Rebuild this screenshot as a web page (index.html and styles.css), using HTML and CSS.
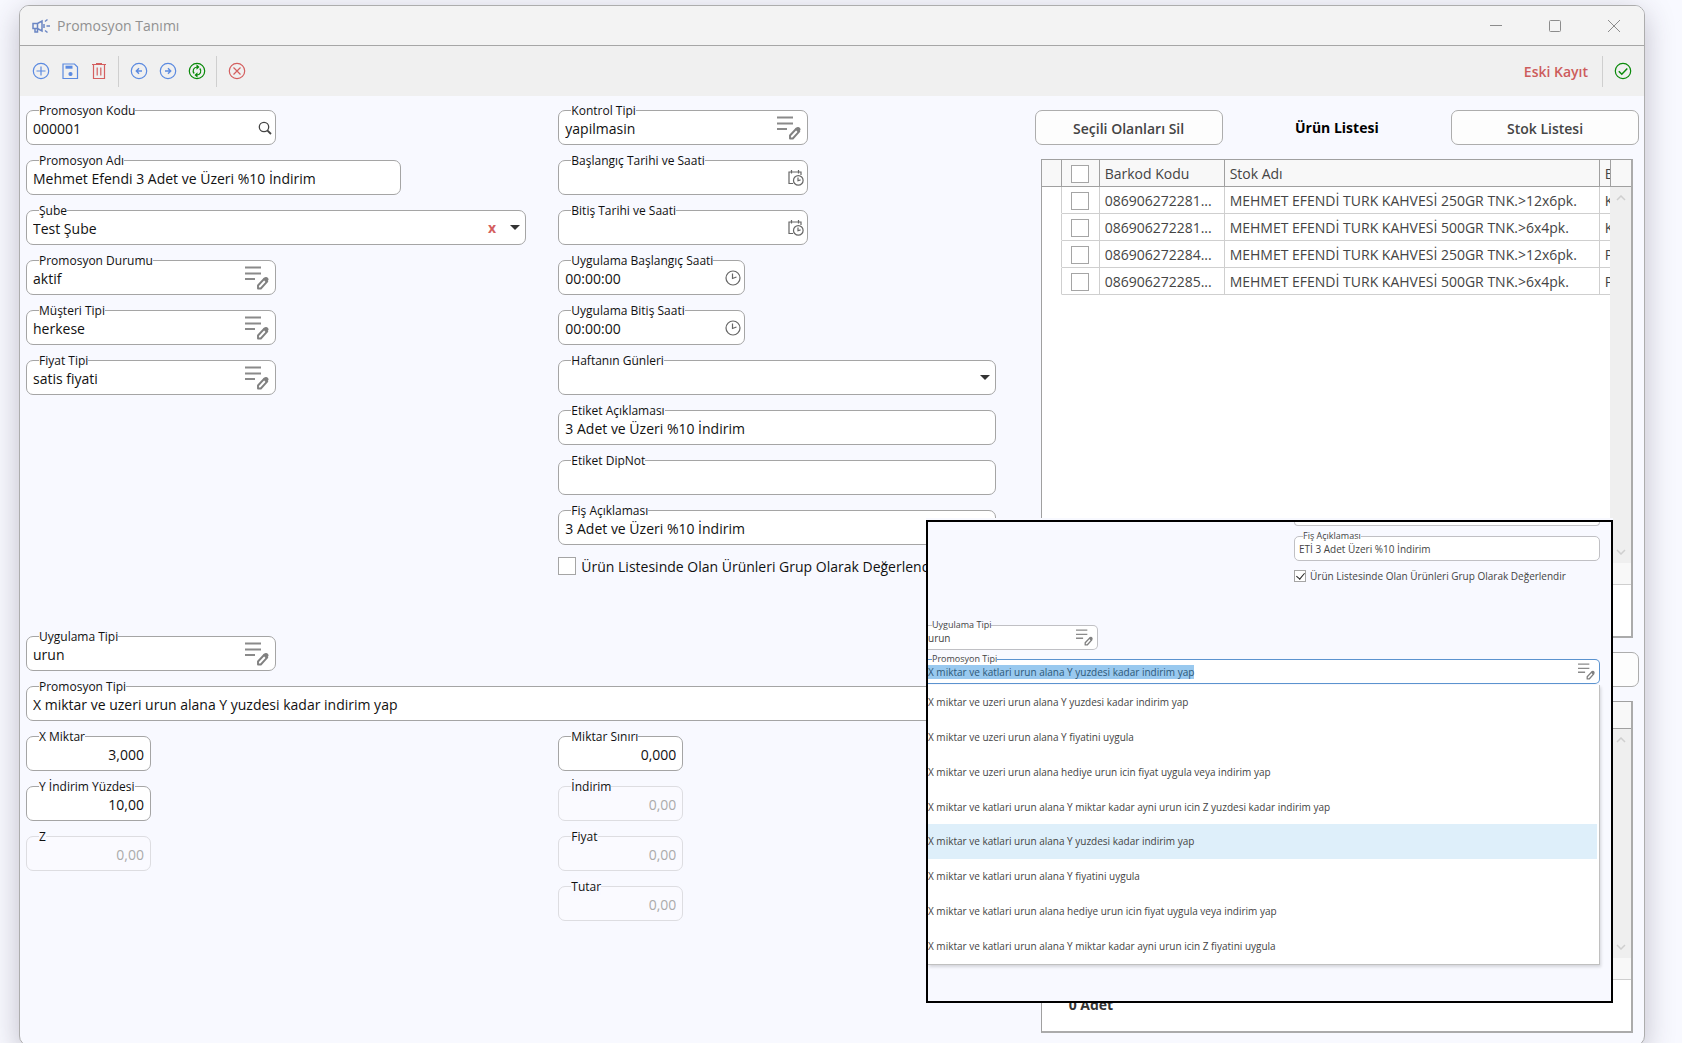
FILE: index.html
```html
<!DOCTYPE html>
<html lang="tr">
<head>
    <meta charset="UTF-8">
    <meta name="viewport" content="width=device-width, initial-scale=1.0">
    <title>Promosyon Tanımı</title>
    <link rel="stylesheet" href="styles.css">
</head>
<body>

<!-- Shared icons -->
<svg class="sprite" aria-hidden="true">
    <symbol id="i-list" viewBox="0 0 24 24">
        <path d="M0 1.500h16M0 7.500h16M0 13h10" fill="none" stroke="#8a8a8a" stroke-width="1.900"/>
        <path d="M13 22.500v-3l6.500-7 2.800 2.800-6.500 7.200z" fill="#fff" stroke="#808080" stroke-width="1.900" stroke-linejoin="round"/>
        <path d="M18 13l2.500-2c1.500-.6 3.500 1.200 3 3l-2.500 2.500z" fill="#808080"/>
    </symbol>
    <symbol id="i-caltime" viewBox="0 0 16 16">
        <path d="M5 13.500H1V2h12v3M3.500 0v3.500M10.500 0v3.500" fill="none" stroke="#666" stroke-width="1.200"/>
        <circle cx="10.300" cy="10.400" r="4.800" fill="#fff" stroke="#666" stroke-width="1.200"/>
        <path d="M10 7.500v3.200l2.600-.8" fill="none" stroke="#666" stroke-width="1.200"/>
    </symbol>
    <symbol id="i-clock" viewBox="0 0 16 16">
        <circle cx="8" cy="8" r="7" fill="none" stroke="#666" stroke-width="1.200"/>
        <path d="M7.500 3.500v5l4-1.500" fill="none" stroke="#666" stroke-width="1.200"/>
    </symbol>
    <symbol id="i-up" viewBox="0 0 10 6"><path d="M1 5l4-4 4 4" fill="none" stroke="#cfcfcf" stroke-width="1.500"/></symbol>
    <symbol id="i-down" viewBox="0 0 10 6"><path d="M1 1l4 4 4-4" fill="none" stroke="#cfcfcf" stroke-width="1.500"/></symbol>
</svg>

<div class="window">
    <header class="titlebar">
        <svg class="title-icon" viewBox="0 0 18 16" fill="none" stroke="#6b86c4" stroke-width="1.500">
            <path d="M1 5.500h4.500L10 3v10L5.500 10.500H1zM3 10.500V14h2.500v-3.500"/>
            <path d="M5.500 5.500v5M12 6v4M14.500 8H18M13 3.500L15.500 1.500M13 12.500l2.500 2"/>
        </svg>
        <h1 class="title">Promosyon Tanımı</h1>
        <div class="window-buttons">
            <button type="button" aria-label="Küçült"><svg viewBox="0 0 14 14"><path d="M1 6.500h12"/></svg></button>
            <button type="button" aria-label="Büyüt"><svg viewBox="0 0 14 14"><rect x="1.500" y="1.500" width="11" height="11" rx="1"/></svg></button>
            <button type="button" aria-label="Kapat"><svg viewBox="0 0 14 14"><path d="M1 1l12 12M13 1L1 13"/></svg></button>
        </div>
    </header>

    <div class="toolbar">
        <button type="button" class="tool blue" aria-label="Yeni"><svg viewBox="0 0 18 18"><circle cx="9" cy="9" r="7.700"/><path d="M9 4.500v9M4.500 9h9"/></svg></button>
        <button type="button" class="tool blue" aria-label="Kaydet"><svg viewBox="0 0 18 18"><path d="M2 2h11.500L16.500 5v11.500H2z"/><path d="M4.500 5.200h7" stroke-width="3"/><circle cx="9.500" cy="12" r="1.500" fill="#5b8ae0"/></svg></button>
        <button type="button" class="tool red" aria-label="Sil"><svg viewBox="0 0 18 18"><path d="M2 2.500h14M3.500 2.500v14h11v-14M7.200 5.500v8M10.800 5.500v8M6 1.500h6"/></svg></button>
        <span class="tool-sep"></span>
        <button type="button" class="tool blue" aria-label="Önceki"><svg viewBox="0 0 18 18"><circle cx="9" cy="9" r="7.700"/><path d="M12 9H6.500M9 6.300L6.300 9 9 11.700" stroke-width="1.400"/></svg></button>
        <button type="button" class="tool blue" aria-label="Sonraki"><svg viewBox="0 0 18 18"><circle cx="9" cy="9" r="7.700"/><path d="M6 9h5.500M9 6.300L11.700 9 9 11.700" stroke-width="1.400"/></svg></button>
        <button type="button" class="tool green" aria-label="Yenile"><svg viewBox="0 0 18 18"><circle cx="9" cy="9" r="7.700"/><path d="M6.200 11.500C4 9 5.500 5 9.500 5M11.800 6.500C14 9 12.500 13 8.500 13"/><path d="M8.500 2.200v5.600L11.500 5zM9.500 10.200v5.600L6.500 13z" fill="#0a8a0a" stroke="none"/></svg></button>
        <span class="tool-sep"></span>
        <button type="button" class="tool red" aria-label="Vazgeç"><svg viewBox="0 0 18 18"><circle cx="9" cy="9" r="7.700"/><path d="M5.500 5.500l7 7M12.500 5.500l-7 7"/></svg></button>
        <strong class="record-state">Eski Kayıt</strong>
        <span class="tool-sep"></span>
        <button type="button" class="tool green" aria-label="Onayla"><svg viewBox="0 0 18 18"><circle cx="9" cy="9" r="7.700"/><path d="M4.800 9.200l3 3 5.500-5.700" stroke-width="1.500"/></svg></button>
    </div>

    <main class="content">
        <form class="form">
            <div class="form-columns">
                <div class="stack">
                    <div class="field w-md">
                        <label for="kod">Promosyon Kodu</label>
                        <input id="kod" type="text" value="000001">
                        <button type="button" class="field-btn narrow" aria-label="Ara"><svg class="icon-sm" viewBox="0 0 14 14" fill="none" stroke="#444"><circle cx="6" cy="6" r="4.700" stroke-width="1.300"/><path d="M9.300 9.300L13 13" stroke-width="1.800"/></svg></button>
                    </div>
                    <div class="field w-lg">
                        <label for="ad">Promosyon Adı</label>
                        <input id="ad" type="text" value="Mehmet Efendi 3 Adet ve Üzeri %10 İndirim">
                    </div>
                    <div class="field w-xl">
                        <label for="sube">Şube</label>
                        <select id="sube"><option>Test Şube</option></select>
                        <button type="button" class="clear-btn" aria-label="Temizle">x</button>
                        <span class="caret"></span>
                    </div>
                    <div class="field w-md">
                        <label for="durum">Promosyon Durumu</label>
                        <input id="durum" type="text" value="aktif">
                        <button type="button" class="field-btn" aria-label="Seç"><svg class="icon-lg"><use href="#i-list"/></svg></button>
                    </div>
                    <div class="field w-md">
                        <label for="musteri">Müşteri Tipi</label>
                        <input id="musteri" type="text" value="herkese">
                        <button type="button" class="field-btn" aria-label="Seç"><svg class="icon-lg"><use href="#i-list"/></svg></button>
                    </div>
                    <div class="field w-md">
                        <label for="fiyattipi">Fiyat Tipi</label>
                        <input id="fiyattipi" type="text" value="satis fiyati">
                        <button type="button" class="field-btn" aria-label="Seç"><svg class="icon-lg"><use href="#i-list"/></svg></button>
                    </div>
                </div>

                <div class="stack">
                    <div class="field w-md">
                        <label for="kontrol">Kontrol Tipi</label>
                        <input id="kontrol" type="text" value="yapilmasin">
                        <button type="button" class="field-btn" aria-label="Seç"><svg class="icon-lg"><use href="#i-list"/></svg></button>
                    </div>
                    <div class="field w-md">
                        <label for="bastarih">Başlangıç Tarihi ve Saati</label>
                        <input id="bastarih" type="text">
                        <button type="button" class="field-btn narrow" aria-label="Tarih seç"><svg class="icon-md"><use href="#i-caltime"/></svg></button>
                    </div>
                    <div class="field w-md">
                        <label for="bittarih">Bitiş Tarihi ve Saati</label>
                        <input id="bittarih" type="text">
                        <button type="button" class="field-btn narrow" aria-label="Tarih seç"><svg class="icon-md"><use href="#i-caltime"/></svg></button>
                    </div>
                    <div class="field w-time">
                        <label for="bassaat">Uygulama Başlangıç Saati</label>
                        <input id="bassaat" type="text" value="00:00:00">
                        <button type="button" class="field-btn narrow" aria-label="Saat seç"><svg class="icon-md"><use href="#i-clock"/></svg></button>
                    </div>
                    <div class="field w-time">
                        <label for="bitsaat">Uygulama Bitiş Saati</label>
                        <input id="bitsaat" type="text" value="00:00:00">
                        <button type="button" class="field-btn narrow" aria-label="Saat seç"><svg class="icon-md"><use href="#i-clock"/></svg></button>
                    </div>
                    <div class="field">
                        <label for="gunler">Haftanın Günleri</label>
                        <select id="gunler"><option></option></select>
                        <span class="caret"></span>
                    </div>
                    <div class="field">
                        <label for="etiket">Etiket Açıklaması</label>
                        <input id="etiket" type="text" value="3 Adet ve Üzeri %10 İndirim">
                    </div>
                    <div class="field">
                        <label for="dipnot">Etiket DipNot</label>
                        <input id="dipnot" type="text">
                    </div>
                    <div class="field">
                        <label for="fis">Fiş Açıklaması</label>
                        <input id="fis" type="text" value="3 Adet ve Üzeri %10 İndirim">
                    </div>
                    <label class="check-row"><input type="checkbox" class="check"> Ürün Listesinde Olan Ürünleri Grup Olarak Değerlendir</label>
                </div>
            </div>

            <div class="stack wide-fields">
                <div class="field w-md">
                    <label for="uygulama">Uygulama Tipi</label>
                    <input id="uygulama" type="text" value="urun">
                    <button type="button" class="field-btn" aria-label="Seç"><svg class="icon-lg"><use href="#i-list"/></svg></button>
                </div>
                <div class="field">
                    <label for="tip">Promosyon Tipi</label>
                    <input id="tip" type="text" value="X miktar ve uzeri urun alana Y yuzdesi kadar indirim yap">
                </div>
            </div>

            <div class="form-columns">
                <div class="stack">
                    <div class="field num w-sm"><label for="x">X Miktar</label><input id="x" type="text" value="3,000"></div>
                    <div class="field num w-sm"><label for="y">Y İndirim Yüzdesi</label><input id="y" type="text" value="10,00"></div>
                    <div class="field num w-sm off"><label for="z">Z</label><input id="z" type="text" value="0,00" disabled></div>
                </div>
                <div class="stack">
                    <div class="field num w-sm"><label for="sinir">Miktar Sınırı</label><input id="sinir" type="text" value="0,000"></div>
                    <div class="field num w-sm off"><label for="indirim">İndirim</label><input id="indirim" type="text" value="0,00" disabled></div>
                    <div class="field num w-sm off"><label for="fiyat">Fiyat</label><input id="fiyat" type="text" value="0,00" disabled></div>
                    <div class="field num w-sm off"><label for="tutar">Tutar</label><input id="tutar" type="text" value="0,00" disabled></div>
                </div>
            </div>
        </form>

        <section class="lists">
            <div class="list-head">
                <button type="button" class="btn">Seçili Olanları Sil</button>
                <h2>Ürün Listesi</h2>
                <button type="button" class="btn">Stok Listesi</button>
            </div>
            <div class="grid grid-main">
                <div class="grid-body">
                    <div class="grid-view">
                        <table>
                            <colgroup><col class="c-mark"><col class="c-check"><col class="c-code"><col class="c-name"><col class="c-unit"></colgroup>
                            <thead>
                                <tr><th></th><th><input type="checkbox" class="check" aria-label="Tümünü seç"></th><th>Barkod Kodu</th><th>Stok Adı</th><th>B</th></tr>
                            </thead>
                            <tbody>
                                <tr><td></td><td><input type="checkbox" class="check" aria-label="Satır 1"></td><td>086906272281...</td><td>MEHMET EFENDİ TURK KAHVESİ 250GR TNK.&gt;12x6pk.</td><td>K</td></tr>
                                <tr><td></td><td><input type="checkbox" class="check" aria-label="Satır 2"></td><td>086906272281...</td><td>MEHMET EFENDİ TURK KAHVESİ 500GR TNK.&gt;6x4pk.</td><td>K</td></tr>
                                <tr><td></td><td><input type="checkbox" class="check" aria-label="Satır 3"></td><td>086906272284...</td><td>MEHMET EFENDİ TURK KAHVESİ 250GR TNK.&gt;12x6pk.</td><td>P</td></tr>
                                <tr><td></td><td><input type="checkbox" class="check" aria-label="Satır 4"></td><td>086906272285...</td><td>MEHMET EFENDİ TURK KAHVESİ 500GR TNK.&gt;6x4pk.</td><td>P</td></tr>
                            </tbody>
                        </table>
                    </div>
                    <div class="grid-scroll">
                        <div class="scroll-head"></div>
                        <div class="scroll-track"><svg><use href="#i-up"/></svg><svg><use href="#i-down"/></svg></div>
                    </div>
                </div>
                <div class="grid-strip"></div>
                <div class="grid-footer"></div>
            </div>

            <div class="list-head second">
                <button type="button" class="btn" aria-label="Stok Listesi"></button>
            </div>
            <div class="grid grid-gift">
                <div class="grid-body">
                    <div class="grid-view"></div>
                    <div class="grid-scroll">
                        <div class="scroll-head"></div>
                        <div class="scroll-track"><svg><use href="#i-up"/></svg><svg><use href="#i-down"/></svg></div>
                    </div>
                </div>
                <div class="grid-strip"></div>
                <div class="grid-footer">0 Adet</div>
            </div>
        </section>
    </main>

    <!-- Floating panel with the open promotion type list -->
    <aside class="popup">
        <div class="popup-right">
            <div class="mini-tail"></div>
            <div class="field mini">
                <label for="p-fis">Fiş Açıklaması</label>
                <input id="p-fis" type="text" value="ETİ 3 Adet Üzeri %10 İndirim">
            </div>
            <label class="check-row mini-check"><input type="checkbox" class="check" checked> Ürün Listesinde Olan Ürünleri Grup Olarak Değerlendir</label>
        </div>
        <div class="popup-fields">
            <div class="field mini cut w-mini">
                <label for="p-uyg">Uygulama Tipi</label>
                <input id="p-uyg" type="text" value="urun">
                <button type="button" class="field-btn" aria-label="Seç"><svg class="icon-mini"><use href="#i-list"/></svg></button>
            </div>
            <div class="field mini cut active">
                <label id="p-tip-label">Promosyon Tipi</label>
                <div class="combo-value" role="combobox" aria-labelledby="p-tip-label" aria-expanded="true" aria-controls="p-list" tabindex="0"><mark>X miktar ve katlari urun alana Y yuzdesi kadar indirim yap</mark></div>
                <button type="button" class="field-btn" aria-label="Seç"><svg class="icon-mini"><use href="#i-list"/></svg></button>
            </div>
            <ul class="options" id="p-list" role="listbox">
                <li role="option">X miktar ve uzeri urun alana Y yuzdesi kadar indirim yap</li>
                <li role="option">X miktar ve uzeri urun alana Y fiyatini uygula</li>
                <li role="option">X miktar ve uzeri urun alana hediye urun icin fiyat uygula veya indirim yap</li>
                <li role="option">X miktar ve katlari urun alana Y miktar kadar ayni urun icin Z yuzdesi kadar indirim yap</li>
                <li role="option" aria-selected="true">X miktar ve katlari urun alana Y yuzdesi kadar indirim yap</li>
                <li role="option">X miktar ve katlari urun alana Y fiyatini uygula</li>
                <li role="option">X miktar ve katlari urun alana hediye urun icin fiyat uygula veya indirim yap</li>
                <li role="option">X miktar ve katlari urun alana Y miktar kadar ayni urun icin Z fiyatini uygula</li>
            </ul>
        </div>
    </aside>
</div>

</body>
</html>
```
FILE: styles.css
```css
* { box-sizing: border-box; }
body {
    margin: 0;
    padding: 5px 37px 0 19px;
    min-height: 100vh;
    background-color: #f8f9ff;
    color: #111;
    font-family: "Open Sans", "Noto Sans", sans-serif;
    font-size: 14px;
    overflow: hidden;
}
button, input, select {
    font: inherit;
    color: inherit;
}
button {
    padding: 0;
    border: none;
    background: none;
}
.sprite {
    position: absolute;
    width: 0;
    height: 0;
}

/* Window frame */
.window {
    position: relative;
    border: 1px solid #adadad;
    border-radius: 10px;
    background-color: #f8f9ff;
    box-shadow: 0 8px 30px rgba(50, 40, 60, 0.28);
}
.titlebar {
    display: flex;
    align-items: center;
    height: 40px;
    padding-left: 12px;
    border-bottom: 1px solid #a6a6a6;
    border-radius: 9px 9px 0 0;
    background-color: #f3f3f3;
}
.title-icon {
    width: 18px;
    height: 16px;
}
.title {
    margin: 0 auto 0 7px;
    font-size: 14px;
    font-weight: 400;
    color: #919191;
}
.window-buttons {
    display: flex;
    padding-right: 1px;
}
.window-buttons button {
    display: flex;
    align-items: center;
    justify-content: center;
    width: 59px;
    height: 38px;
}
.window-buttons svg {
    width: 14px;
    height: 14px;
    fill: none;
    stroke: #8c8c8c;
}

/* Toolbar */
.toolbar {
    display: flex;
    align-items: center;
    height: 50px;
    padding: 0 7px 0 6px;
    background-color: #f0f0f0;
}
.tool {
    display: flex;
    justify-content: center;
    width: 29px;
}
.tool svg {
    width: 18px;
    height: 18px;
    fill: none;
    stroke: currentColor;
    stroke-width: 1.2;
}
.blue { color: #5b8ae0; }
.red { color: #d45f5f; }
.green { color: #0a8a0a; }
.tool-sep {
    width: 1px;
    height: 31px;
    margin: 0 5px;
    background-color: #cfcfcf;
}
.record-state {
    margin-left: auto;
    margin-right: 9px;
    font-weight: 600;
    color: #cd5c5c;
}

/* Page layout */
.content {
    display: grid;
    grid-template-columns: minmax(0, 1008fr) minmax(0, 604fr);
    padding: 14px 5px 12px 6px;
}
.form-columns {
    display: grid;
    grid-template-columns: minmax(0, 532fr) minmax(0, 476fr);
}
.stack {
    display: flex;
    flex-direction: column;
    gap: 15px;
}
.form .stack:nth-child(2) { padding-right: 39px; }
.form .wide-fields {
    margin: 60px 0 15px;
    padding-right: 39px;
}

/* Fields */
.field {
    position: relative;
    display: flex;
    align-items: center;
    height: 35px;
    border: 1px solid #a5a5a5;
    border-radius: 7px;
    background-color: #fff;
}
.field > label {
    position: absolute;
    top: -9px;
    left: 12px;
    font-size: 12px;
    line-height: 17px;
    white-space: nowrap;
    background: linear-gradient(#f8f9ff 60%, #fff 60%);
}
.field input, .field select {
    flex: 1;
    min-width: 0;
    height: 33px;
    padding: 2px 6px 0;
    border: none;
    border-radius: 7px;
    outline: none;
    background: none;
    appearance: none;
}
.w-sm { width: 125px; }
.w-time { width: 187px; }
.w-md { width: 250px; }
.w-lg { width: 375px; }
.w-xl { width: 500px; }
.num input { text-align: right; }
.off {
    border-color: #dddde1;
    background-color: #fafaff;
}
.off > label { background: #f9f9ff; }
.off input { color: #ababab; }
.field-btn {
    display: flex;
    margin-right: 6px;
}
.field-btn.narrow { margin-right: 3px; }
.icon-sm { width: 14px; height: 14px; }
.icon-md { width: 16px; height: 16px; }
.icon-lg { width: 24px; height: 24px; }
.icon-mini { width: 17px; height: 17px; }
.clear-btn {
    margin-right: 14px;
    font-weight: 700;
    color: #d45f5f;
}
.caret {
    margin-right: 5px;
    border: 5px solid transparent;
    border-top-color: #333;
    border-bottom: none;
}

/* Check boxes */
.check {
    flex: none;
    width: 18px;
    height: 18px;
    margin: 0;
    border: 1px solid #a5a5a5;
    background-color: #fff;
    appearance: none;
}
.check-row {
    display: flex;
    align-items: center;
    gap: 5px;
    height: 20px;
    margin-top: -4px;
    white-space: nowrap;
}

/* Product lists */
.list-head {
    display: grid;
    grid-template-columns: 188px 1fr 188px;
    align-items: center;
    margin-bottom: 14px;
}
.list-head h2 {
    margin: 0;
    font-size: 14px;
    font-weight: 700;
    text-align: center;
    color: #000;
}
.list-head.second { margin-top: 14px; }
.list-head.second .btn { grid-column: 3; }
.btn {
    height: 35px;
    padding-top: 1px;
    border: 1px solid #adadad;
    border-radius: 7px;
    background-color: #fdfdfd;
    font-weight: 600;
    color: #444;
}
.grid {
    display: flex;
    flex-direction: column;
    margin: 0 6px;
    border: 1px solid #a0a0a0;
    border-right: 2px solid #ababab;
    border-bottom: 2px solid #ababab;
    background-color: #fff;
}
.grid-main { height: 479px; }
.grid-gift { height: 332px; }
.grid-body {
    display: flex;
    flex: 1;
    min-height: 0;
}
.grid-view {
    flex: 1;
    min-width: 0;
    overflow: hidden;
}
.grid-scroll {
    display: flex;
    flex-direction: column;
    width: 21px;
}
.scroll-head {
    height: 27px;
    border-bottom: 1px solid #a0a0a0;
    border-left: 1px solid #a0a0a0;
    background-color: #f8f8f8;
}
.scroll-track {
    display: flex;
    flex: 1;
    flex-direction: column;
    justify-content: space-between;
    align-items: center;
    padding: 8px 0;
    background-color: #efefef;
}
.scroll-track svg {
    width: 10px;
    height: 6px;
}
.grid-strip {
    height: 22px;
    border-bottom: 1px solid #cfcfcf;
    background-color: #f8f8f8;
}
.grid-footer {
    height: 51px;
    padding: 15px 27px;
    line-height: 20px;
    font-weight: 700;
    color: #333;
}

table {
    width: 683px;
    table-layout: fixed;
    border-spacing: 0;
    color: #444;
}
.c-mark { width: 20px; }
.c-check { width: 38px; }
.c-code, .c-unit { width: 125px; }
.c-name { width: 375px; }
th, td {
    height: 27px;
    padding: 2px 5px 0;
    border-right: 1px solid #cfcfcf;
    border-bottom: 1px solid #cfcfcf;
    font-weight: 400;
    line-height: 20px;
    text-align: left;
    white-space: nowrap;
}
th {
    border-color: #a0a0a0;
    background-color: #f8f8f8;
}
td:first-child { border-bottom-color: #fff; }
th:nth-child(2), td:nth-child(2) {
    text-align: center;
    line-height: 0;
}

/* Popup */
.popup {
    position: absolute;
    top: 514px;
    right: 31px;
    width: 687px;
    height: 483px;
    overflow: hidden;
    border: 2px solid #000;
    background-color: #f8f9ff;
    box-shadow: 0 -2px 0 #f8f9ff;
    color: #444;
    font-size: 10px;
}
.popup-right {
    width: 306px;
    margin-left: 366px;
}
.mini-tail {
    height: 4px;
    margin-bottom: 10px;
    border: 1px solid #c4c4c8;
    border-top: none;
    border-radius: 0 0 5px 5px;
    background-color: #fff;
}
.field.mini {
    height: 25px;
    border-color: #c0c0c4;
    border-radius: 5px;
}
.mini > label {
    top: -7px;
    left: 8px;
    font-size: 9px;
    line-height: 12px;
}
.mini input {
    height: 23px;
    padding: 1px 4px 0;
}
.mini .field-btn { margin-right: 4px; }
.mini-check {
    gap: 4px;
    height: 14px;
    margin-top: 8px;
}
.mini-check .check {
    display: grid;
    place-items: center;
    width: 12px;
    height: 12px;
}
.mini-check .check::before {
    content: "";
    width: 4px;
    height: 7px;
    margin-top: -2px;
    border: solid #222;
    border-width: 0 1px 1px 0;
    rotate: 40deg;
}
.popup-fields { margin: 42px 11px 0 0; }
.field.cut {
    margin-bottom: 9px;
    border-left: none;
    border-radius: 0 5px 5px 0;
}
.cut > label { left: 4px; }
.cut input { padding-left: 0; }
.w-mini { width: 170px; }
.field.active {
    margin-bottom: 1px;
    border-color: #5b93cf;
}
.combo-value {
    flex: 1;
    outline: none;
}
.combo-value mark {
    display: inline-block;
    height: 14px;
    line-height: 14px;
    background-color: #99c9ef;
    color: #2d5878;
}
.options {
    display: grid;
    grid-template-rows: repeat(8, 1fr);
    height: 280px;
    margin: 0;
    padding: 0 2px 1px 0;
    list-style: none;
    border-right: 1px solid #c0c0c0;
    border-bottom: 1px solid #c0c0c0;
    background-color: #fff;
    box-shadow: 1px 2px 3px rgba(0, 0, 0, 0.15);
}
.options li {
    display: flex;
    align-items: center;
}
.options li[aria-selected="true"] { background-color: #deeffa; }
```
